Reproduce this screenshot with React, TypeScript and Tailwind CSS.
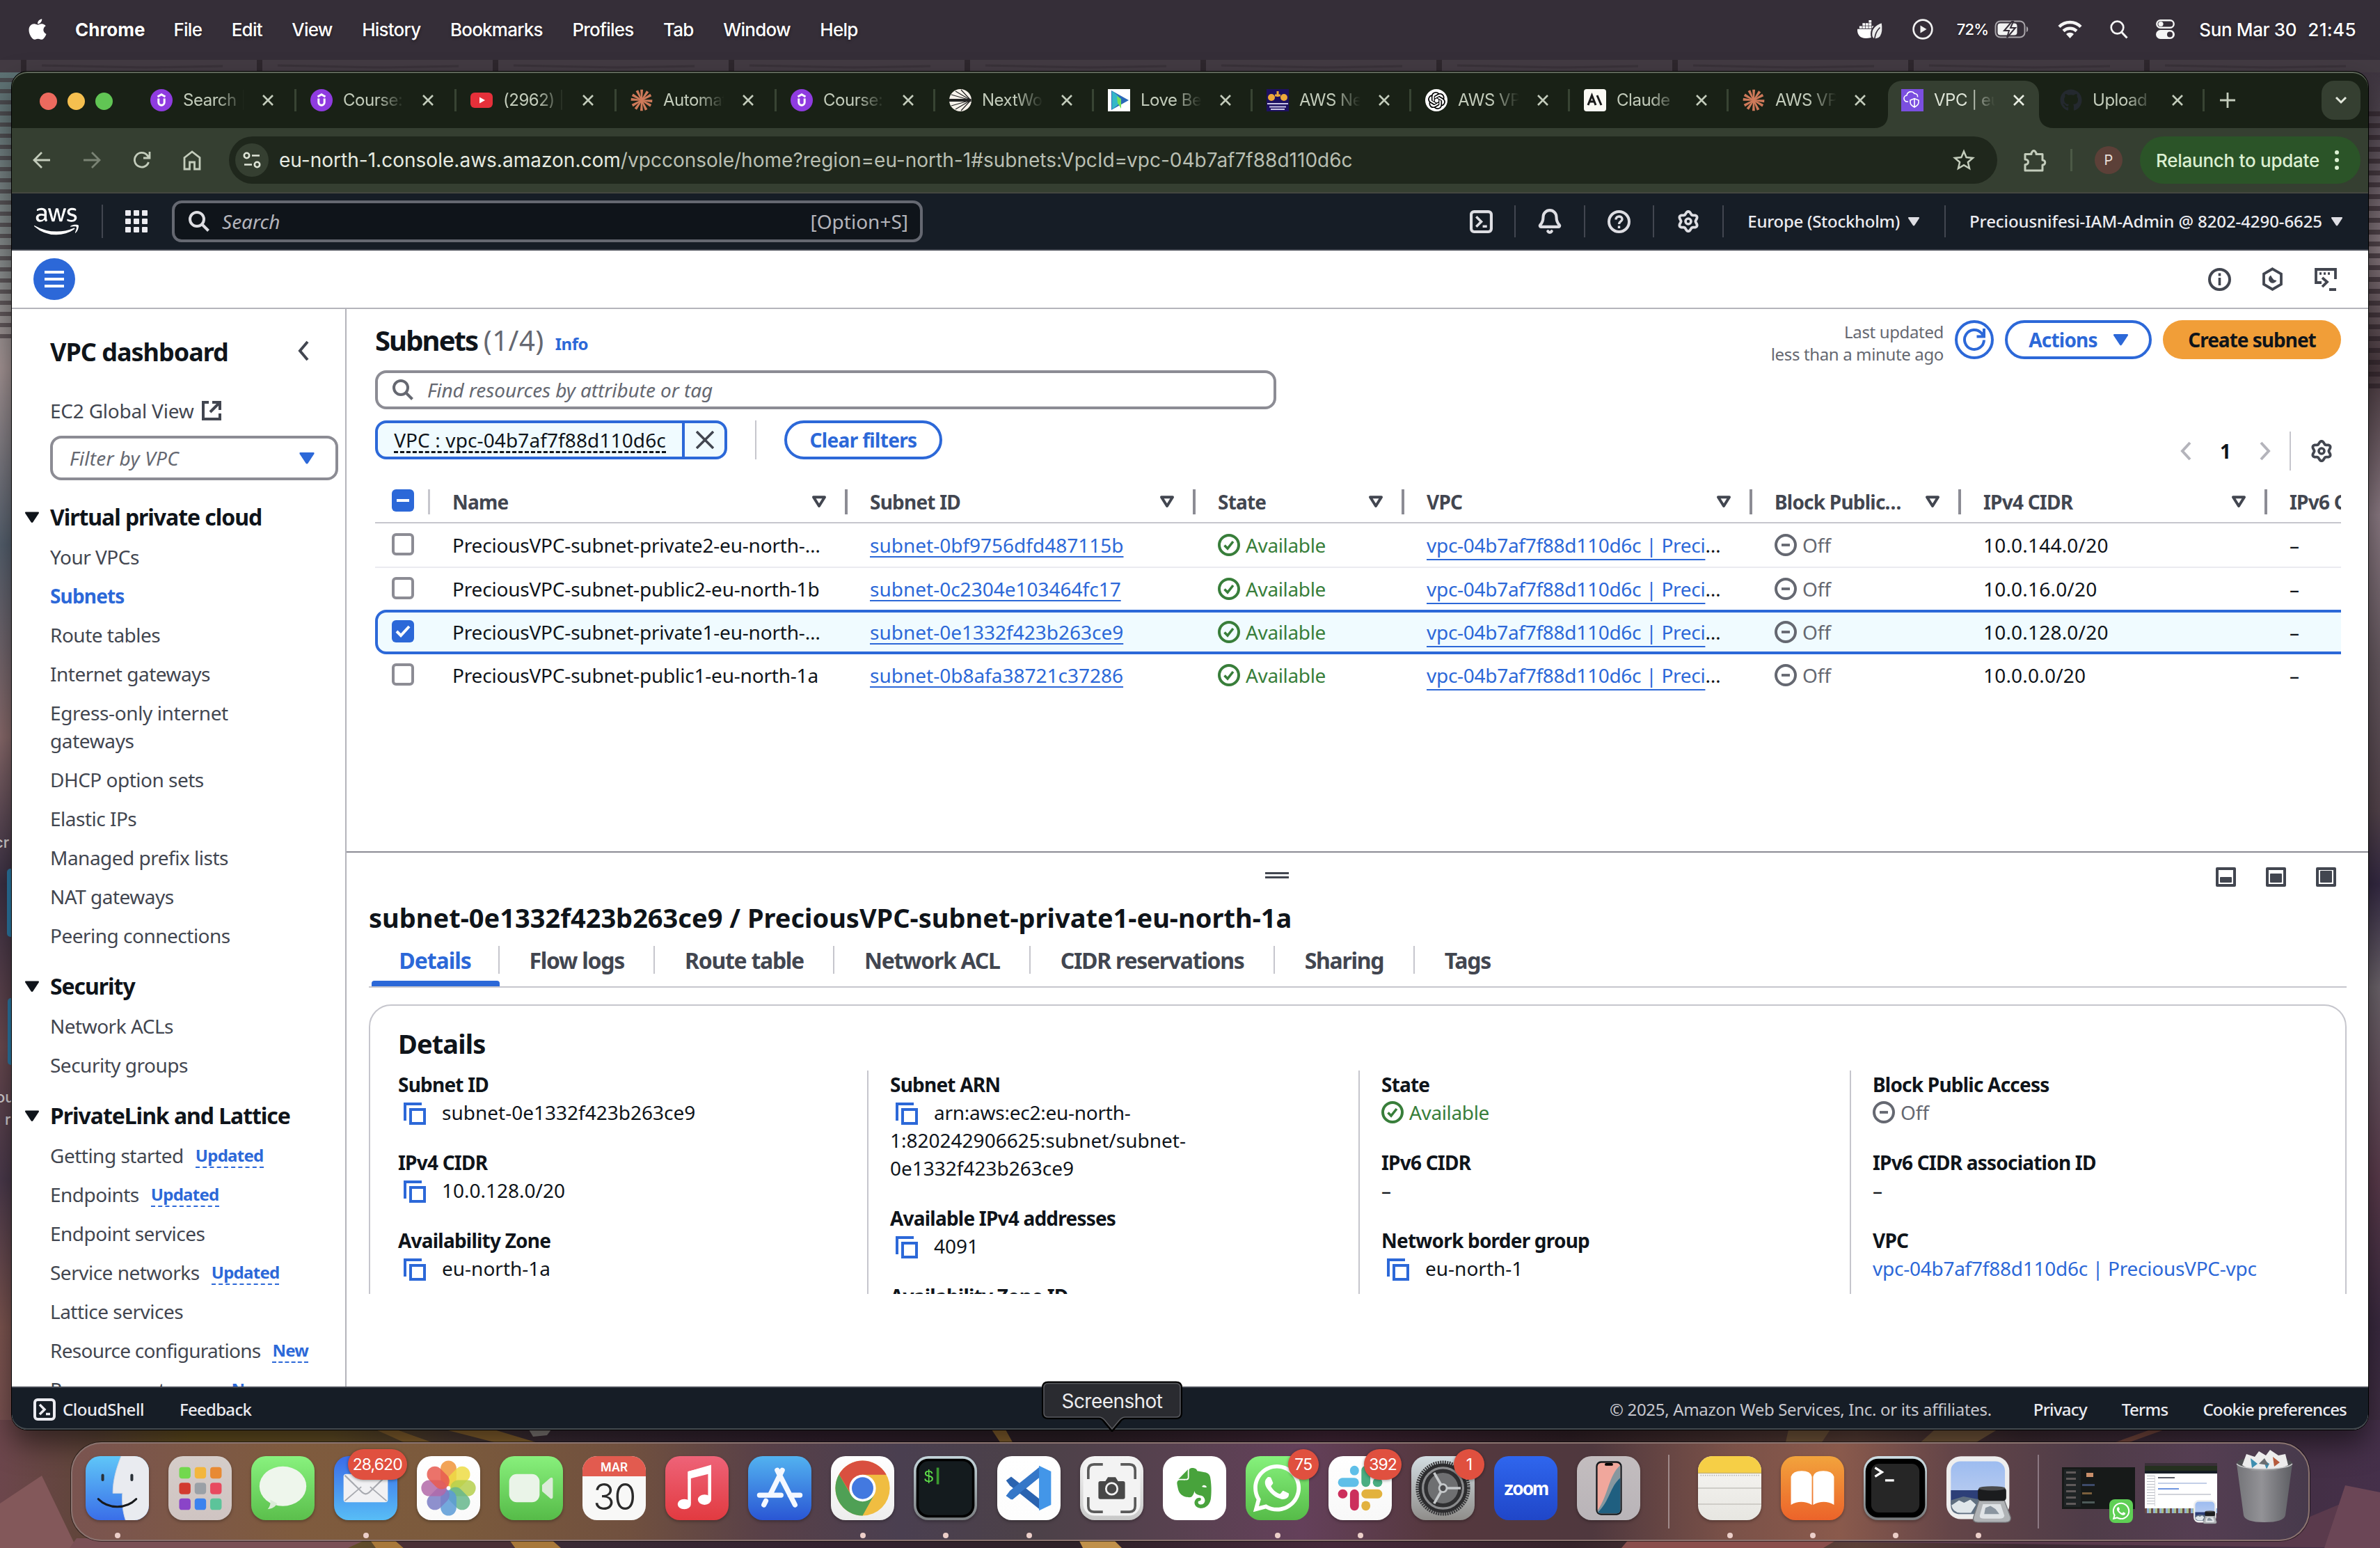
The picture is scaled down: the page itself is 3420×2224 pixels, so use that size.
import type { ReactNode } from "react";
import { Bell } from "lucide-react";
import { FaApple, FaGithub, FaWhatsapp, FaEvernote, FaDocker, FaAws } from "react-icons/fa";
import { SiOpenai } from "react-icons/si";

/* ---------- desktop ---------- */

function Wallpaper() {
  const bricks = Array.from({ length: 11 });
  const slats = Array.from({ length: 24 });
  return (
    <svg className="absolute inset-0 h-full w-full" viewBox="0 0 3420 2224" preserveAspectRatio="none">
      <defs>
        <linearGradient id="wl" x1="0" y1="0" x2="0" y2="1">
          <stop offset="0" stopColor="#5d7274" />
          <stop offset=".14" stopColor="#8d9090" />
          <stop offset=".2" stopColor="#a59595" />
          <stop offset=".32" stopColor="#56616f" />
          <stop offset=".45" stopColor="#8a6b6c" />
          <stop offset=".55" stopColor="#3a3044" />
          <stop offset=".66" stopColor="#6a4a50" />
          <stop offset=".75" stopColor="#4b3a4c" />
          <stop offset=".85" stopColor="#7d5550" />
          <stop offset="1" stopColor="#754e52" />
        </linearGradient>
        <linearGradient id="wr" x1="0" y1="0" x2="0" y2="1">
          <stop offset="0" stopColor="#3e3540" />
          <stop offset=".12" stopColor="#85777d" />
          <stop offset=".2" stopColor="#4a3a40" />
          <stop offset=".3" stopColor="#8c7b84" />
          <stop offset=".4" stopColor="#665960" />
          <stop offset=".5" stopColor="#54444c" />
          <stop offset=".55" stopColor="#352a44" />
          <stop offset=".62" stopColor="#6d656c" />
          <stop offset=".75" stopColor="#5b3b4c" />
          <stop offset=".85" stopColor="#3a2a40" />
          <stop offset="1" stopColor="#4a3548" />
        </linearGradient>
        <linearGradient id="wb" x1="0" y1="0" x2="1" y2="0">
          <stop offset="0" stopColor="#6c464c" />
          <stop offset=".04" stopColor="#5f4538" />
          <stop offset=".08" stopColor="#66501f" />
          <stop offset=".14" stopColor="#665026" />
          <stop offset=".19" stopColor="#4c3b33" />
          <stop offset=".23" stopColor="#3a2b36" />
          <stop offset=".35" stopColor="#33212f" />
          <stop offset=".45" stopColor="#2e2128" />
          <stop offset=".56" stopColor="#45283a" />
          <stop offset=".66" stopColor="#35232a" />
          <stop offset=".78" stopColor="#5b4038" />
          <stop offset=".85" stopColor="#3c2a32" />
          <stop offset="1" stopColor="#45304a" />
        </linearGradient>
      </defs>
      <rect width="3420" height="120" fill="#3d343c" />
      <rect y="86" width="3420" height="22" fill="#433b43" />
      {bricks.map((_, i) => (
        <g key={i}>
          <rect x={30 + i * 339} y="86" width="8" height="20" fill="#2e272d" />
          <path d={`M${60 + i * 339} 94 l150 3 l110 -2`} stroke="#3a323a" strokeWidth="3" fill="none" />
        </g>
      ))}
      <rect y="104" width="30" height="2120" fill="url(#wl)" />
      <rect x="3390" y="104" width="30" height="2120" fill="url(#wr)" />
      {slats.map((_, i) => (
        <g key={i}>
          <rect x="0" y={112 + i * 16} width="20" height="6" fill="#3c3036" opacity=".6" />
          <rect x="3402" y={160 + i * 17} width="18" height="7" fill="#2c2026" opacity=".6" />
        </g>
      ))}
      <rect y="2040" width="3420" height="184" fill="url(#wb)" />
      <path d="M0 2160 L60 2120 L110 2224 L0 2224Z" fill="#83585a" />
      <path d="M110 2210 h420 l-30 14 h-400z" fill="#7a5056" />
      <path d="M530 2210 h34 l16 14 h-40z M730 2210 h60 l16 14 h-66z" fill="#a8783a" />
      <path d="M564 2210 h166 l10 14 h-160z" fill="#4a3036" />
      <path d="M540 2054 l40 18 h40 l-50 -18z M640 2054 l70 18 h60 l-60 -18z M1425 2054 l12 18 h18 l-10 -18z" fill="#8a642f" />
      <path d="M760 2054 h32 l-6 8 -20 2z" fill="#8a8480" />
      <path d="M1550 2212 h50 l12 12 h-56z" fill="#c0904a" />
      <path d="M2570 2054 h60 l-12 18 h-52z M2780 2054 h90 l-30 18 h-80z" fill="#75583c" />
      <path d="M3040 2072 l50 -18 h20 l-50 18z" fill="#7a4a40" />
      <path d="M2340 2212 h900 l120 -50 40 0 20 62z" fill="#5a3a4c" />
      <path d="M3340 2224 l30 -90 50 10 v80z" fill="#6b4656" />
      <path d="M2340 2212 h300 l-20 12 h-290z" fill="#8a4e4c" />
      <rect x="10" y="1248" width="10" height="98" rx="5" fill="#2d7ba8" />
      <rect x="11" y="1434" width="9" height="96" rx="5" fill="#2d7ba8" />
    </svg>
  );
}

function MenuBar() {
  return (
    <div className="relative flex h-[86px] shrink-0 items-center bg-[#352e38] pb-[2px] pl-[38px] pr-[34px] font-['Inter',sans-serif] text-[26px] font-medium tracking-[-0.03em] text-white [text-shadow:0_2px_4px_rgba(0,0,0,0.4)]">
      <FaApple className="mr-[38px] h-[34px] w-[32px]" />
      <span className="mr-[41px] font-bold tracking-normal">Chrome</span>
      <div className="flex gap-[42.600px]">
        {["File", "Edit", "View", "History", "Bookmarks", "Profiles", "Tab", "Window", "Help"].map((m) => (
          <span key={m}>{m}</span>
        ))}
      </div>
      <div className="ml-auto flex items-center">
        <span className="relative mr-[42px] flex">
          <FaDocker className="h-[36px] w-[37px]" />
          <svg className="absolute -right-[2px] top-[6px] h-[30px] w-[22px]" viewBox="0 0 20 26">
            <path d="M17 1C5 5 2 12 3 19c1 5 8 6 12 1 4-6 3-13 2-19z" fill="#ececec" stroke="#352e38" strokeWidth="2" />
            <path d="M14 8c-5 5-6 9-7 15" stroke="#352e38" strokeWidth="1.500" fill="none" />
          </svg>
        </span>
        <svg className="mr-[34px] h-[30px] w-[30px]" viewBox="0 0 30 30">
          <circle cx="15" cy="15" r="13.400" fill="none" stroke="#f2f2f2" strokeWidth="2.600" />
          <path d="M11.500 9.500v11l9-5.500z" fill="#f2f2f2" />
        </svg>
        <span className="mr-[9px] text-[22px]">72%</span>
        <svg className="mr-[41px] h-[28px] w-[50px]" viewBox="0 0 50 28">
          <rect x="1.500" y="2.500" width="42" height="23" rx="7" fill="none" stroke="#a9a5aa" strokeWidth="2" />
          <rect x="4.500" y="5.500" width="28" height="17" rx="4" fill="#f2f2f2" />
          <path d="M46 10c3 1 3 7 0 8z" fill="#a9a5aa" />
          <path d="M25 3L14 16h7l-3 10 12-14h-7l4-9z" fill="#f2f2f2" stroke="#352e38" strokeWidth="2" />
        </svg>
        <svg className="mr-[40px] h-[26px] w-[35px]" viewBox="0 0 35 26">
          <g fill="none" stroke="#f5f5f5" strokeWidth="4.400">
            <path d="M2 9.500C10.500 .8 24.500 .8 33 9.500" />
            <path d="M8 15.500c5.500-5 13.500-5 19 0" />
          </g>
          <path d="M12 20c3-3 8-3 11 0l-5.500 6z" fill="#f5f5f5" />
        </svg>
        <svg className="mr-[40px] h-[27px] w-[26px]" viewBox="0 0 26 27">
          <circle cx="10.500" cy="10.500" r="8.800" fill="none" stroke="#f5f5f5" strokeWidth="2.700" />
          <path d="M17 17.500l7.500 8" stroke="#f5f5f5" strokeWidth="3" />
        </svg>
        <svg className="mr-[35px] h-[28px] w-[27px]" viewBox="0 0 27 28">
          <rect x="1.300" y="1.300" width="24.400" height="10.400" rx="5.200" fill="none" stroke="#f5f5f5" strokeWidth="2.400" />
          <circle cx="7" cy="6.500" r="3.600" fill="#f5f5f5" />
          <rect y="15" width="27" height="13" rx="6.500" fill="#f5f5f5" />
          <circle cx="20" cy="21.500" r="4" fill="#352e38" />
        </svg>
        <span className="mr-[16px] tracking-[-0.014em]">Sun Mar 30</span>
        <span className="tracking-[0.015em]">21:45</span>
      </div>
    </div>
  );
}

/* ---------- browser chrome ---------- */

function Udemy() {
  return (
    <svg viewBox="0 0 32 32" className="h-8 w-8">
      <circle cx="16" cy="16" r="16" fill="#8f3be0" />
      <path d="M10.500 11l5.500-3.200 5.500 3.200M11.800 13.500v5.500a4.200 4.200 0 0 0 8.400 0v-5.500" fill="none" stroke="#fff" strokeWidth="3" />
    </svg>
  );
}
function YouTube() {
  return (
    <svg viewBox="0 0 32 32" className="h-8 w-8">
      <rect y="5" width="32" height="22" rx="6" fill="#e5303a" />
      <path d="M13 11.500v9l8-4.500z" fill="#fff" />
    </svg>
  );
}
function Burst() {
  return (
    <svg viewBox="0 0 32 32" className="h-8 w-8">
      {Array.from({ length: 12 }).map((_, i) => (
        <path key={i} d="M16 16L15 1.500h2.200z" stroke="#cf7a5a" strokeWidth="1.600" fill="#cf7a5a" transform={`rotate(${i * 30 + (i % 2) * 4} 16 16)`} />
      ))}
    </svg>
  );
}
function NextWork() {
  return (
    <svg viewBox="0 0 32 32" className="h-8 w-8">
      <circle cx="16" cy="16" r="16" fill="#f6f1ea" />
      <path d="M0 14.500h31v3H0zM31 16L9 3M31 16L17 1M31 16L9 29M31 16L17 31M31 16L3 8M31 16L3 24" stroke="#222" strokeWidth="1.200" fill="#222" />
    </svg>
  );
}
function LoveBeauty() {
  return (
    <svg viewBox="0 0 32 32" className="h-8 w-8">
      <rect width="32" height="32" fill="#fff" />
      <path d="M5 2l25 14L5 30z" fill="#2a69b8" />
      <path d="M6 3c6 4 11 8 12 13-1 5-6 9-12 13z" fill="#35b8c8" />
      <path d="M13 10l6 4v14l-5-8z" fill="#74e05a" />
    </svg>
  );
}
function Mentorship() {
  return (
    <svg viewBox="0 0 32 32" className="h-8 w-8">
      <rect width="32" height="32" fill="#1d1060" />
      <circle cx="7" cy="12" r="5" fill="#eda93a" />
      <circle cx="25" cy="12" r="5" fill="#eda93a" />
      <path d="M16 3v8M12 9h8" stroke="#eda93a" strokeWidth="3" />
      <path d="M1 21h30M4 25.500h24M6 29h20" stroke="#c9c4e6" strokeWidth="1.800" />
    </svg>
  );
}
function OpenAi() {
  return (
    <span className="flex h-8 w-8 items-center justify-center rounded-full bg-white">
      <SiOpenai className="h-[25px] w-[25px] text-black" />
    </span>
  );
}
function AnthropicMark() {
  return (
    <svg viewBox="0 0 32 32" className="h-8 w-8">
      <rect width="32" height="32" rx="4" fill="#fbfaf4" />
      <path d="M6 23l5.500-14 5.500 14M8 18h7M19 9l6 14" fill="none" stroke="#1a1a1a" strokeWidth="3" />
    </svg>
  );
}
function VpcMark() {
  return (
    <svg viewBox="0 0 32 32" className="h-8 w-8">
      <rect width="32" height="32" fill="#7b4fe0" />
      <path d="M10 18H9a4.500 4.500 0 0 1-1-9 6 6 0 0 1 11-2.500 4 4 0 0 1 4.500 5" fill="none" stroke="#fff" strokeWidth="1.600" />
      <path d="M13 16l6-2.500 6 2.500v3c0 3.500-3 5.500-6 7-3-1.500-6-3.500-6-7zM19 14v12" fill="none" stroke="#fff" strokeWidth="1.600" />
    </svg>
  );
}

const tabs: { icon: ReactNode; title: string; active?: boolean }[] = [
  { icon: <Udemy />, title: "Search |" },
  { icon: <Udemy />, title: "Course:" },
  { icon: <YouTube />, title: "(2962) |" },
  { icon: <Burst />, title: "Automat" },
  { icon: <Udemy />, title: "Course:" },
  { icon: <NextWork />, title: "NextWo" },
  { icon: <LoveBeauty />, title: "Love Be" },
  { icon: <Mentorship />, title: "AWS Ne" },
  { icon: <OpenAi />, title: "AWS VP" },
  { icon: <AnthropicMark />, title: "Claude" },
  { icon: <Burst />, title: "AWS VP" },
  { icon: <VpcMark />, title: "VPC | eu", active: true },
  { icon: <FaGithub className="h-8 w-8 text-[#24292f]" />, title: "Upload" },
];

function TabStrip() {
  return (
    <div className="flex h-[81px] shrink-0 items-start bg-[#192116] pl-[40px] pr-[11px] font-['Inter',sans-serif] text-[24px] tracking-[-0.02em] text-[#c3ccbb]">
      <div className="mt-[30px] flex w-[139px] shrink-0 gap-[15px]">
        <span className="h-[25px] w-[25px] rounded-full bg-[#ed6a5e]" />
        <span className="h-[25px] w-[25px] rounded-full bg-[#f5bf4f]" />
        <span className="h-[25px] w-[25px] rounded-full bg-[#61c554]" />
      </div>
      {tabs.map((t, i) => (
        <div key={i} className={i < 4 ? "relative h-[81px] w-[230px] shrink-0 pt-[13px]" : "relative h-[81px] w-[228px] shrink-0 pt-[13px]"}>
          {t.active && (
            <svg className="absolute left-[-19px] top-[13px] h-[68px] w-[258px]" viewBox="0 0 258 68">
              <path d="M0 68C14 68 20 60 20 48V20A20 20 0 0 1 40 0H217A20 20 0 0 1 237 20V48C237 60 244 68 258 68Z" fill="#353f31" />
            </svg>
          )}
          <div className="relative flex h-[56px] items-center pl-[20px]">
            {t.icon}
            <span className={t.active ? "ml-[15px] w-[88px] overflow-hidden whitespace-nowrap text-[#dfe5d8] [mask-image:linear-gradient(to_right,black_55%,transparent)]" : "ml-[15px] w-[88px] overflow-hidden whitespace-nowrap [mask-image:linear-gradient(to_right,black_55%,transparent)]"}>
              {t.title}
            </span>
            <svg className="ml-[25px] h-[18px] w-[18px]" viewBox="0 0 18 18">
              <path d="M2 2l14 14M16 2L2 16" stroke={t.active ? "#e8ede2" : "#c3ccbb"} strokeWidth="2.600" />
            </svg>
            {i !== 10 && i !== 11 && <span className="ml-auto h-[32px] w-[3px] bg-[#384433]" />}
          </div>
        </div>
      ))}
      <svg className="ml-[22px] mt-[30px] h-[22px] w-[22px] shrink-0" viewBox="0 0 22 22">
        <path d="M11 0v22M0 11h22" stroke="#c3ccbb" strokeWidth="2.800" />
      </svg>
      <span className="ml-auto mt-[13px] flex h-[56px] w-[56px] items-center justify-center rounded-[18px] bg-[#353f31]">
        <svg className="h-[12px] w-[18px]" viewBox="0 0 18 12">
          <path d="M2 2l7 7 7-7" fill="none" stroke="#e3e8dc" strokeWidth="3" />
        </svg>
      </span>
    </div>
  );
}

function Toolbar() {
  return (
    <div className="flex h-[94px] shrink-0 items-center border-b-2 border-[#44473f] bg-[#353f31] pl-[30px] pr-[11px] font-['Inter',sans-serif]">
      <svg className="h-[28px] w-[26px]" viewBox="0 0 26 26"><path d="M25 13H3M13 2L2 13l11 11" fill="none" stroke="#c3ccbb" strokeWidth="2.800" /></svg>
      <svg className="ml-[46px] h-[28px] w-[26px]" viewBox="0 0 26 26"><path d="M1 13h22M13 2l11 11-11 11" fill="none" stroke="#7a8374" strokeWidth="2.800" /></svg>
      <svg className="ml-[46px] h-[28px] w-[26px]" viewBox="0 0 26 26"><path d="M22.500 16A10.300 10.300 0 1 1 20.500 6l3 3.500M24 1v9h-9" fill="none" stroke="#c3ccbb" strokeWidth="2.800" /></svg>
      <svg className="ml-[46px] h-[30px] w-[26px]" viewBox="0 0 26 30"><path d="M2 11.500L13 3l11 8.500V28h-7.500V18h-7v10H2z" fill="none" stroke="#c3ccbb" strokeWidth="2.800" /></svg>
      <div className="ml-[40px] flex h-[68px] w-[2541px] items-center rounded-full bg-[#1f271c] pl-[9px] pr-[32px]">
        <span className="flex h-[48px] w-[48px] items-center justify-center rounded-full bg-[#353f31]">
          <svg className="h-[24px] w-[26px]" viewBox="0 0 26 24" fill="none" stroke="#dfe5d8" strokeWidth="2.600">
            <circle cx="5.500" cy="5.500" r="3.700" /><path d="M13 5.500h11M2 18.500h11" /><circle cx="20.500" cy="18.500" r="3.700" />
          </svg>
        </span>
        <span className="ml-[15px] whitespace-nowrap text-[28px] tracking-[0.0006em] text-[#b9bfb3]">
          <span className="text-[#e6eae1]">eu-north-1.console.aws.amazon.com</span>/vpcconsole/home?region=eu-north-1#subnets:VpcId=vpc-04b7af7f88d110d6c
        </span>
        <svg className="ml-auto h-[32px] w-[32px]" viewBox="0 0 32 32">
          <path d="M16 3.500l3.600 8.600 9.300.8-7 6.100 2.100 9L16 23.200 8 28l2.100-9-7-6.100 9.300-.8z" fill="none" stroke="#c3ccbb" strokeWidth="2.500" />
        </svg>
      </div>
      <svg className="ml-[37px] h-[34px] w-[34px]" viewBox="0 0 34 34">
        <path d="M3 8.500h9V7q3.500-7 7 0v1.500H28v8.500c5 0 5 7 0 7v8H3v-8.500c6 0 6-7.500 0-7.500z" fill="none" stroke="#c3ccbb" strokeWidth="3" strokeLinejoin="round" />
      </svg>
      <span className="ml-[34px] h-[32px] w-[3px] bg-[#4c5a46]" />
      <span className="ml-[32px] flex h-[40px] w-[40px] items-center justify-center rounded-full bg-[#5c4038] text-[20px] text-[#eadfd8]">P</span>
      <div className="ml-auto flex h-[68px] w-[317px] items-center rounded-full bg-[#2b5428] pl-[23px] text-[26px] font-medium tracking-[-0.01em] text-[#dcefd2]">
        <span>Relaunch to update</span>
        <svg className="ml-[22px] h-[28px] w-[6px]" viewBox="0 0 6 28" fill="#dcefd2">
          <circle cx="3" cy="3" r="3" /><circle cx="3" cy="14" r="3" /><circle cx="3" cy="25" r="3" />
        </svg>
      </div>
    </div>
  );
}

/* ---------- AWS console ---------- */

const gearOutline =
  Array.from({ length: 72 })
    .map((_, i) => {
      const a = (i / 72) * Math.PI * 2;
      const r = 12.300 + 1.900 * Math.cos(6 * (a + Math.PI / 2));
      return `${i === 0 ? "M" : "L"}${(16 + r * Math.cos(a)).toFixed(2)} ${(16 + r * Math.sin(a)).toFixed(2)}`;
    })
    .join("") + "Z";

function Gear({ className }: { className: string }) {
  return (
    <svg className={className} viewBox="0 0 32 32" fill="none" stroke="currentColor" strokeWidth="3.800" strokeLinejoin="round">
      <path d={gearOutline} transform="rotate(0 16 16)" />
      <circle cx="16" cy="16" r="4" strokeWidth="3.600" />
    </svg>
  );
}
function ShellIcon({ className }: { className: string }) {
  return (
    <svg className={className} viewBox="0 0 32 32" fill="none" stroke="currentColor" strokeWidth="4">
      <rect x="2" y="2" width="28" height="28" rx="4" />
      <path d="M9 9l7 7-7 7M18 22.500h6" strokeWidth="3.500" />
    </svg>
  );
}
function Caret({ className }: { className: string }) {
  return (
    <svg className={className} viewBox="0 0 20 16"><path d="M1 0h18q1.500 .3.700 2L11.500 14.500q-1.500 2-3 0L.3 2Q-.5.300 1 0z" fill="currentColor" /></svg>
  );
}
function SearchIcon({ className }: { className: string }) {
  return (
    <svg className={className} viewBox="0 0 30 30" fill="none" stroke="currentColor" strokeWidth="4">
      <circle cx="12" cy="12" r="10" /><path d="M19 19l9.500 9.500" />
    </svg>
  );
}
function NavSep() {
  return <span className="h-[46px] w-[2px] shrink-0 bg-[#424650]" />;
}

function AwsNav() {
  return (
    <div className="flex h-[82px] shrink-0 items-center border-b-2 border-[#424650] bg-[#161d26] pl-[32px] pr-[37px] text-white">
      <FaAws className="h-[64px] w-[64px] shrink-0" />
      <span className="ml-[33px] h-[48px] w-[2px] bg-[#424650]" />
      <div className="ml-[32px] grid grid-cols-3 gap-[4px]">
        {Array.from({ length: 9 }).map((_, i) => (
          <span key={i} className="h-[8px] w-[8px] rounded-[1px] bg-[#ebebf0]" />
        ))}
      </div>
      <div className="ml-[35px] flex h-[60px] w-[1079px] items-center rounded-[14px] border-4 border-[#656871] bg-[#0f141a] pl-[20px] pr-[17px] text-[28px] text-[#b4b4bb]">
        <SearchIcon className="h-[30px] w-[30px] text-[#dedee3]" />
        <span className="ml-[18px] italic">Search</span>
        <span className="ml-auto">[Option+S]</span>
      </div>
      <div className="ml-auto flex items-center text-[#dedee3]">
        <ShellIcon className="mr-[31px] h-[33px] w-[33px]" />
        <NavSep />
        <Bell className="mx-[30px] h-[38px] w-[38px]" strokeWidth={2.600} />
        <NavSep />
        <svg className="mx-[32px] h-[33px] w-[33px]" viewBox="0 0 33 33" fill="none" stroke="currentColor" strokeWidth="4">
          <circle cx="16.500" cy="16.500" r="14.500" />
          <path d="M12 13.500c0-6 9-6 9-.5 0 3.500-4.500 3-4.500 7M16.500 22.500v3.500" strokeWidth="3.400" />
        </svg>
        <NavSep />
        <Gear className="mx-[33px] h-[32px] w-[32px]" />
        <NavSep />
        <span className="ml-[34px] text-[24px] font-medium tracking-[-0.012em] text-[#ebebf0]">Europe (Stockholm)</span>
        <Caret className="ml-[12px] mr-[36px] h-[13px] w-[16px]" />
        <NavSep />
        <span className="ml-[34px] text-[24px] font-medium tracking-[-0.0035em] text-[#ebebf0]">Preciousnifesi-IAM-Admin @ 8202-4290-6625</span>
        <Caret className="ml-[13px] h-[13px] w-[16px]" />
      </div>
    </div>
  );
}

function PageBar() {
  return (
    <div className="flex h-[84px] shrink-0 items-center border-b-2 border-[#b4b4bb] bg-white pl-[31px] pr-[44px] text-[#424650]">
      <span className="flex h-[60px] w-[60px] items-center justify-center rounded-full bg-[#2c68d8]">
        <svg className="h-[24px] w-[28px]" viewBox="0 0 28 24"><path d="M0 2h28M0 12h28M0 22h28" stroke="#fff" strokeWidth="4" /></svg>
      </span>
      <svg className="ml-auto h-[33px] w-[33px]" viewBox="0 0 33 33" fill="none" stroke="currentColor" strokeWidth="4">
        <circle cx="16.500" cy="16.500" r="14.500" /><path d="M16.500 7.500v4M16.500 14v11" strokeWidth="3.600" />
      </svg>
      <svg className="ml-[43px] h-[34px] w-[33px]" viewBox="0 0 33 34" fill="none" stroke="currentColor" strokeWidth="3.800">
        <path d="M16.500 2.300L29 9.500v15L16.500 31.700 4 24.500v-15z" />
        <path d="M14 11.500a6 6 0 1 0 8.500 7.500l-4-1-2.500-3z" fill="currentColor" stroke="none" />
      </svg>
      <svg className="ml-[43px] h-[33px] w-[34px]" viewBox="0 0 34 33" fill="none" stroke="currentColor" strokeWidth="3.800">
        <path d="M31 16V2H3v19h8" /><path d="M8 8h3M14 8h3M20 8h3" strokeWidth="3.600" />
        <path d="M12 14l7 6-7 7M22 31h10" />
      </svg>
    </div>
  );
}

type NavItem = { label: string; badge?: string; active?: boolean };
const navSections: { title: string; items: NavItem[] }[] = [
  {
    title: "Virtual private cloud",
    items: [
      { label: "Your VPCs" },
      { label: "Subnets", active: true },
      { label: "Route tables" },
      { label: "Internet gateways" },
      { label: "Egress-only internet gateways" },
      { label: "DHCP option sets" },
      { label: "Elastic IPs" },
      { label: "Managed prefix lists" },
      { label: "NAT gateways" },
      { label: "Peering connections" },
    ],
  },
  { title: "Security", items: [{ label: "Network ACLs" }, { label: "Security groups" }] },
  {
    title: "PrivateLink and Lattice",
    items: [
      { label: "Getting started", badge: "Updated" },
      { label: "Endpoints", badge: "Updated" },
      { label: "Endpoint services" },
      { label: "Service networks", badge: "Updated" },
      { label: "Lattice services" },
      { label: "Resource configurations", badge: "New" },
      { label: "Resource gateways", badge: "New" },
    ],
  },
];

function SideNav() {
  return (
    <div className="w-[481px] shrink-0 overflow-hidden border-r-2 border-[#b4b4bb] pl-[55px] text-[#424650]">
      <div className="mt-[41px] flex h-[42px] items-center">
        <span className="text-[36px] font-bold tracking-[-0.028em] text-[#0f141a]">VPC dashboard</span>
        <svg className="ml-[99px] mt-[-4px] h-[30px] w-[18px]" viewBox="0 0 18 30"><path d="M15 2L4 15l11 13" fill="none" stroke="#424650" strokeWidth="4" /></svg>
      </div>
      <div className="mt-[43px] flex h-[40px] items-center text-[28px] tracking-[-0.008em]">
        EC2 Global View
        <svg className="ml-[12px] h-[28px] w-[28px]" viewBox="0 0 28 28" fill="none" stroke="currentColor" strokeWidth="4">
          <path d="M10 2H2v24h24v-8M15 2h11v11M25 3L12 16" />
        </svg>
      </div>
      <div className="mt-[16px] flex h-[64px] w-[414px] items-center rounded-[16px] border-4 border-[#8c8c94] pl-[24px] pr-[30px] text-[28px] italic tracking-[0.01em] text-[#656871]">
        Filter by VPC
        <Caret className="ml-auto h-[17px] w-[22px] text-[#2c68d8]" />
      </div>
      {navSections.map((s) => (
        <div key={s.title} className="mt-[33px]">
          <div className="ml-[-36px] flex h-[40px] items-center text-[#0f141a]">
            <Caret className="h-[17px] w-[20px]" />
            <span className="ml-[16px] text-[32px] font-bold tracking-[-0.033em]">{s.title}</span>
          </div>
          <div className="mt-[17px] flex flex-col gap-[16px] text-[28px] leading-[40px] tracking-[-0.022em]">
            {s.items.map((it) => (
              <div key={it.label} className="flex max-w-[400px] items-start">
                <span className={it.active ? "font-bold tracking-[-0.03em] text-[#2c68d8]" : it.label.startsWith("Egress") ? "w-[300px] tracking-[-0.014em]" : it.label === "Resource configurations" ? "whitespace-nowrap tracking-[-0.026em]" : it.badge ? "whitespace-nowrap tracking-[-0.018em]" : "whitespace-nowrap tracking-[-0.018em]"}>{it.label}</span>
                {it.badge && (
                  <span className="ml-[17px] mt-[4px] h-[34px] border-b-2 border-dashed border-[#2c68d8] text-[24px] font-bold leading-[32px] tracking-[-0.03em] text-[#2c68d8]">{it.badge}</span>
                )}
              </div>
            ))}
          </div>
        </div>
      ))}
    </div>
  );
}

function SubnetsHeader() {
  return (
    <div className="flex h-[88px] shrink-0 items-center pr-[39px]">
      <span className="mt-[2px] text-[40px] font-bold tracking-[-0.048em] text-[#0f141a]">
        Subnets <span className="font-normal tracking-[0.012em] text-[#656871]">(1/4)</span>
      </span>
      <span className="ml-[16px] mt-[12px] text-[24px] font-bold tracking-[-0.02em] text-[#2c68d8]">Info</span>
      <div className="ml-auto mt-[10px] text-right text-[24px] leading-[32px] tracking-[-0.015em] text-[#656871]">
        <div>Last updated</div>
        <div>less than a minute ago</div>
      </div>
      <span className="ml-[16px] flex h-[56px] w-[56px] items-center justify-center rounded-full border-4 border-[#2c68d8] text-[#2c68d8]">
        <svg className="h-[34px] w-[34px]" viewBox="0 0 34 34" fill="none" stroke="currentColor" strokeWidth="4">
          <path d="M31 17.500A14 14 0 1 1 27.300 7.500l3.500 4M31 1v11.500H20.500" />
        </svg>
      </span>
      <span className="ml-[16px] flex h-[56px] w-[211px] items-center justify-center rounded-full border-4 border-[#2c68d8] text-[28px] font-bold tracking-[-0.028em] text-[#2c68d8]">
        Actions
        <Caret className="ml-[23px] h-[17px] w-[21px]" />
      </span>
      <span className="ml-[16px] flex h-[56px] w-[256px] items-center justify-center rounded-full bg-[#f19e38] text-[28px] font-bold tracking-[-0.036em] text-[#0f141a]">Create subnet</span>
    </div>
  );
}

function FilterBar() {
  return (
    <div className="flex h-[144px] shrink-0 items-start pr-[39px]">
      <div className="flex flex-col gap-[16px]">
        <div className="flex h-[56px] w-[1295px] items-center rounded-[16px] border-4 border-[#8c8c94] pl-[21px] text-[28px] italic tracking-[-0.003em] text-[#656871]">
          <SearchIcon className="mr-[20px] h-[30px] w-[30px]" />
          Find resources by attribute or tag
        </div>
        <div className="flex h-[56px] items-center">
          <div className="flex h-[56px] w-[506px] overflow-hidden rounded-[16px] border-4 border-[#2c68d8] bg-[#f0fbff]">
            <div className="flex flex-1 items-center justify-center border-r-4 border-[#2c68d8]">
              <span className="h-[38px] border-b-[3px] border-dashed border-[#0f141a] text-[28px] leading-[38px] tracking-[0.004em] text-[#0f141a]">VPC : vpc-04b7af7f88d110d6c</span>
            </div>
            <div className="flex w-[57px] items-center justify-center">
              <svg className="h-[26px] w-[26px]" viewBox="0 0 26 26"><path d="M1 1l24 24M25 1L1 25" stroke="#424650" strokeWidth="3.600" /></svg>
            </div>
          </div>
          <span className="ml-[40px] h-[56px] w-[2px] bg-[#c6c6cd]" />
          <span className="ml-[40px] flex h-[56px] w-[227px] items-center justify-center rounded-full border-4 border-[#2c68d8] text-[28px] font-bold tracking-[-0.024em] text-[#2c68d8]">Clear filters</span>
        </div>
      </div>
      <div className="ml-auto flex h-[56px] items-center self-end">
        <svg className="h-[28px] w-[18px]" viewBox="0 0 18 28"><path d="M15 2L4 14l11 12" fill="none" stroke="#b4b4bb" strokeWidth="4" /></svg>
        <span className="ml-[39px] w-[18px] text-center text-[28px] font-bold text-[#0f141a]">1</span>
        <svg className="ml-[39px] h-[28px] w-[18px]" viewBox="0 0 18 28"><path d="M3 2l11 12L3 26" fill="none" stroke="#b4b4bb" strokeWidth="4" /></svg>
        <span className="ml-[26px] h-[56px] w-[2px] bg-[#c6c6cd]" />
        <Gear className="ml-[28px] mr-[12px] h-[32px] w-[32px] text-[#424650]" />
      </div>
    </div>
  );
}

function FilterGlyph() {
  return (
    <svg className="ml-auto mr-[26px] h-[18px] w-[22px] shrink-0" viewBox="0 0 22 18"><path d="M3 2.200h16L11 15z" fill="none" stroke="#424650" strokeWidth="4" strokeLinejoin="round" /></svg>
  );
}

const columns = [
  { label: "Name", width: "w-[600px]" },
  { label: "Subnet ID", width: "w-[500px]" },
  { label: "State", width: "w-[300px]" },
  { label: "VPC", width: "w-[500px]" },
  { label: "Block Public…", width: "w-[300px]" },
  { label: "IPv4 CIDR", width: "w-[440px]" },
];

const subnets = [
  { name: "PreciousVPC-subnet-private2-eu-north-…", id: "subnet-0bf9756dfd487115b", cidr: "10.0.144.0/20" },
  { name: "PreciousVPC-subnet-public2-eu-north-1b", id: "subnet-0c2304e103464fc17", cidr: "10.0.16.0/20" },
  { name: "PreciousVPC-subnet-private1-eu-north-…", id: "subnet-0e1332f423b263ce9", cidr: "10.0.128.0/20", selected: true },
  { name: "PreciousVPC-subnet-public1-eu-north-1a", id: "subnet-0b8afa38721c37286", cidr: "10.0.0.0/20" },
];

function Available() {
  return (
    <span className="flex items-center gap-[8px] tracking-[-0.013em] text-[#387e3a]">
      <svg className="h-[32px] w-[32px]" viewBox="0 0 32 32" fill="none" stroke="currentColor" strokeWidth="4">
        <circle cx="16" cy="16" r="14" /><path d="M9.500 16.500l4.500 4.500 8-10" strokeWidth="3.600" />
      </svg>
      Available
    </span>
  );
}
function Off() {
  return (
    <span className="flex items-center gap-[8px] text-[#656871]">
      <svg className="h-[32px] w-[32px]" viewBox="0 0 32 32" fill="none" stroke="currentColor" strokeWidth="4">
        <circle cx="16" cy="16" r="14" /><path d="M10 16h12" strokeWidth="3.800" />
      </svg>
      Off
    </span>
  );
}

function SubnetsTable() {
  return (
    <div className="w-[2825px] overflow-hidden whitespace-nowrap text-[28px]">
      <div className="flex h-[76px] w-[3000px] items-center border-b-2 border-[#c6c6cd] pt-[16px] font-bold tracking-[-0.028em] text-[#424650]">
        <div className="flex w-[79px] items-center pl-[24px]">
          <span className="mt-[-4px] flex h-[32px] w-[32px] items-center justify-center rounded-[6px] bg-[#2c68d8]"><span className="h-[4px] w-[18px] bg-white" /></span>
          <span className="ml-auto h-[36px] w-[3px] bg-[#c6c6cd]" />
        </div>
        {columns.map((c) => (
          <div key={c.label} className={"flex items-center pl-[32px] " + c.width}>
            {c.label}
            <FilterGlyph />
            <span className="h-[36px] w-[4px] bg-[#8c8c94]" />
          </div>
        ))}
        <div className="pl-[32px]">IPv6 CIDR</div>
      </div>
      {subnets.map((r, i) => (
        <div
          key={r.id}
          className={
            r.selected
              ? "flex h-[64px] w-[3000px] items-center rounded-l-[16px] border-4 border-[#2c68d8] bg-[#f0fbff]"
              : i === 0
                ? "flex h-[64px] w-[3000px] items-center border-b-2 border-[#ebebf0]"
                : "flex h-[60px] w-[3000px] items-center"
          }
        >
          <div className={r.selected ? "flex w-[75px] items-center pl-[20px]" : "flex w-[79px] items-center pl-[24px]"}>
            {r.selected ? (
              <span className="mt-[-3px] flex h-[32px] w-[32px] items-center justify-center rounded-[6px] bg-[#2c68d8]">
                <svg className="h-[18px] w-[22px]" viewBox="0 0 22 18"><path d="M2 9l6 6L20 2" fill="none" stroke="#fff" strokeWidth="4" /></svg>
              </span>
            ) : (
              <span className="mt-[-3px] h-[32px] w-[32px] rounded-[6px] border-4 border-[#8c8c94] bg-white" />
            )}
          </div>
          <div className="w-[600px] pl-[32px] tracking-[-0.007em] text-[#0f141a]">{r.name}</div>
          <div className="w-[500px] pl-[32px] text-[#2c68d8]"><span className="underline decoration-2 underline-offset-[5px]">{r.id}</span></div>
          <div className="w-[300px] pl-[32px]"><Available /></div>
          <div className="w-[500px] pl-[32px]">
            <span className="tracking-[-0.01em] text-[#2c68d8] underline decoration-2 underline-offset-[9px] [text-decoration-skip-ink:none]">vpc-04b7af7f88d110d6c | Preci</span>
            <span className="text-[#0f141a]">…</span>
          </div>
          <div className="w-[300px] pl-[32px]"><Off /></div>
          <div className="w-[440px] pl-[32px] tracking-[0.007em] text-[#0f141a]">{r.cidr}</div>
          <div className="pl-[32px] text-[#0f141a]">–</div>
        </div>
      ))}
    </div>
  );
}

function CopyIcon() {
  return (
    <svg className="ml-[8px] mr-[23px] inline-block h-[32px] w-[32px] align-[-7px]" viewBox="0 0 32 32" fill="none" stroke="#2c68d8" strokeWidth="4">
      <path d="M26 2H2v24" /><rect x="10" y="10" width="20" height="20" />
    </svg>
  );
}

function Field({ label, children }: { label: string; children?: ReactNode }) {
  return (
    <div className="mb-[32px] text-[28px] leading-[40px] text-[#0f141a]">
      <div className="font-bold tracking-[-0.028em]">{label}</div>
      <div>{children}</div>
    </div>
  );
}

function DetailPanel() {
  const detailTabs = ["Flow logs", "Route table", "Network ACL", "CIDR reservations", "Sharing", "Tags"];
  return (
    <div className="absolute inset-x-0 bottom-0 top-[779px] border-t-2 border-[#8c8c94] bg-white pl-[32px] pr-[31px]">
      <div className="flex h-[68px] items-center">
        <span className="ml-[1288px] mt-[-4px] h-[9px] w-[34px] border-y-[3px] border-[#424650]" />
        <div className="ml-auto mr-[15px] mt-[2px] flex gap-[43px]">
          {["h-[8px]", "h-[13px]", "h-[17px]"].map((h) => (
            <span key={h} className="flex h-[28px] w-[29px] items-end justify-center rounded-[2px] border-4 border-[#424650] pb-[2px]">
              <span className={"w-[17px] rounded-[1px] bg-[#424650] " + h} />
            </span>
          ))}
        </div>
      </div>
      <div className="flex h-[50px] items-center whitespace-nowrap text-[38px] font-bold text-[#0f141a]">subnet-0e1332f423b263ce9 / PreciousVPC-subnet-private1-eu-north-1a</div>
      <div className="flex h-[76px] border-b-2 border-[#c6c6cd] text-[32px] font-bold tracking-[-0.04em] text-[#424650]">
        <div className="ml-[4px] flex w-[184px] flex-col items-center text-[#2c68d8]">
          <div className="mt-[16px] h-[40px] w-full border-r-2 border-[#c6c6cd] text-center leading-[42px] tracking-[-0.033em]">Details</div>
          <span className="mt-auto h-[8px] w-full rounded-t-[4px] bg-[#2c68d8]" />
        </div>
        {detailTabs.map((t, i) => (
          <div key={t} className={i === 5 ? "mt-[16px] h-[40px] px-[43px] leading-[42px]" : "mt-[16px] h-[40px] border-r-2 border-[#c6c6cd] px-[42.500px] leading-[42px]"}>{t}</div>
        ))}
      </div>
      <div className="mt-[24px] h-[416px] overflow-hidden">
        <div className="h-[600px] rounded-[32px] border-2 border-[#c6c6cd] pl-[40px] pt-[29px]">
          <div className="h-[50px] text-[38px] font-bold leading-[50px] tracking-[-0.023em] text-[#0f141a]">Details</div>
          <div className="mt-[14px] flex h-[500px]">
            <div className="w-[674px]">
              <Field label="Subnet ID"><CopyIcon />subnet-0e1332f423b263ce9</Field>
              <Field label="IPv4 CIDR"><CopyIcon />10.0.128.0/20</Field>
              <Field label="Availability Zone"><CopyIcon />eu-north-1a</Field>
            </div>
            <div className="w-[706px] border-l-2 border-[#c6c6cd] pl-[31px]">
              <Field label="Subnet ARN">
                <span className="tracking-[-0.009em]"><CopyIcon />arn:aws:ec2:eu-north-</span><br />1:820242906625:subnet/subnet-<br />0e1332f423b263ce9
              </Field>
              <Field label="Available IPv4 addresses"><CopyIcon />4091</Field>
              <Field label="Availability Zone ID" />
            </div>
            <div className="w-[706px] border-l-2 border-[#c6c6cd] pl-[31px]">
              <Field label="State"><Available /></Field>
              <Field label="IPv6 CIDR">–</Field>
              <Field label="Network border group"><CopyIcon />eu-north-1</Field>
            </div>
            <div className="flex-1 border-l-2 border-[#c6c6cd] pl-[31px]">
              <Field label="Block Public Access"><Off /></Field>
              <Field label="IPv6 CIDR association ID">–</Field>
              <Field label="VPC"><span className="tracking-[-0.009em] text-[#2c68d8]">vpc-04b7af7f88d110d6c | PreciousVPC-vpc</span></Field>
            </div>
          </div>
        </div>
      </div>
    </div>
  );
}

function Footer() {
  return (
    <div className="flex h-[62px] shrink-0 items-center border-t-2 border-[#424650] bg-[#161d26] pl-[31px] pr-[31px] pt-[2px] text-[24px] font-medium text-[#ebebf0]">
      <ShellIcon className="h-[32px] w-[32px]" />
      <span className="ml-[10px] tracking-[-0.018em]">CloudShell</span>
      <span className="ml-[51px] tracking-[-0.03em]">Feedback</span>
      <span className="ml-auto font-normal tracking-[-0.013em] text-[#c6c6cd]">© 2025, Amazon Web Services, Inc. or its affiliates.</span>
      <span className="ml-[60px] tracking-[-0.03em]">Privacy</span>
      <span className="ml-[50px] tracking-[-0.03em]">Terms</span>
      <span className="ml-[50px] tracking-[-0.033em]">Cookie preferences</span>
    </div>
  );
}

function BrowserWindow() {
  return (
    <div className="relative mx-[17px] mt-[17px] flex h-[1951px] shrink-0 flex-col overflow-hidden rounded-[22px] bg-[#192116] shadow-[0_0_0_1px_#000,0_20px_40px_rgba(0,0,0,0.5)]">
      <TabStrip />
      <Toolbar />
      <div className="flex min-h-0 flex-1 flex-col bg-white font-['Noto_Sans',sans-serif]">
        <AwsNav />
        <PageBar />
        <div className="flex min-h-0 flex-1">
          <SideNav />
          <div className="relative flex flex-1 flex-col pl-[41px]">
            <SubnetsHeader />
            <FilterBar />
            <SubnetsTable />
            <DetailPanel />
          </div>
        </div>
        <Footer />
      </div>
      <div className="pointer-events-none absolute inset-0 rounded-[22px] shadow-[inset_0_2px_0_#5d6658,inset_0_-2px_0_#444a4f]" />
    </div>
  );
}

/* ---------- dock ---------- */

function Tile({ children, id, from, to }: { children?: ReactNode; id: string; from: string; to: string }) {
  return (
    <svg viewBox="0 0 100 100" className="h-[92px] w-[91px] drop-shadow-[0_2px_2px_rgba(0,0,0,0.3)]" preserveAspectRatio="none">
      <defs>
        <linearGradient id={"t-" + id} x1="0" y1="0" x2="0" y2="1">
          <stop offset="0" stopColor={from} /><stop offset="1" stopColor={to} />
        </linearGradient>
        <clipPath id={"c-" + id}><rect width="100" height="100" rx="23" /></clipPath>
      </defs>
      <g clipPath={`url(#c-${id})`}>
        <rect width="100" height="100" fill={`url(#t-${id})`} />
        {children}
      </g>
    </svg>
  );
}

function Finder() {
  return (
    <Tile id="finder" from="#5fc6f8" to="#3a6ee8">
      <path d="M56 0C48 20 43 38 43 58H58C57 75 59 88 63 100H100V0z" fill="#e9ebf0" />
      <path d="M56 0C48 20 43 38 43 58H58C57 75 59 88 63 100" fill="none" stroke="#c9d2e0" strokeWidth="1" />
      <path d="M27 30v7M73 30v7" stroke="#2a3138" strokeWidth="4.500" strokeLinecap="round" />
      <path d="M20 67c16 16 44 16 60 0" fill="none" stroke="#17191c" strokeWidth="3.200" strokeLinecap="round" />
    </Tile>
  );
}
function Launchpad() {
  const c = ["#72d84e", "#f3b63c", "#e88a34", "#d23a2e", "#9aa0a6", "#e84a5f", "#8a44c8", "#3b82ee", "#5cc49a"];
  return (
    <Tile id="lp" from="#d5cdc9" to="#cfc4c2">
      {c.map((f, i) => <rect key={f} x={17 + (i % 3) * 24.500} y={17 + Math.floor(i / 3) * 24.500} width="18" height="18" rx="4.500" fill={f} />)}
    </Tile>
  );
}
function Messages() {
  return (
    <Tile id="msg" from="#88f27e" to="#5bbf4c">
      <ellipse cx="50" cy="47" rx="37" ry="31" fill="#eef6ec" />
      <path d="M30 68c1 8-1 11-4 15 8-1 12-4 15-9z" fill="#dcebd9" />
    </Tile>
  );
}
function Mail() {
  return (
    <Tile id="mail" from="#3a6be8" to="#58bdf6">
      <rect x="15" y="28" width="70" height="44" rx="4" fill="#f1f1f3" />
      <path d="M17 70l26-22M83 70L57 48" stroke="#a8aab0" strokeWidth="2" />
      <path d="M17 30l28 27q5 4 10 0l28-27" fill="none" stroke="#a8aab0" strokeWidth="2.400" />
    </Tile>
  );
}
function Photos() {
  const c = ["#f0943a", "#eddc44", "#b5cf4c", "#66b68c", "#5a9ad6", "#7a7cc4", "#b268a8", "#e85a50"];
  return (
    <Tile id="ph" from="#ffffff" to="#fafafa">
      {c.map((f, i) => <rect key={f} x="37.500" y="7" width="25" height="40" rx="12.500" fill={f} opacity=".85" transform={`rotate(${i * 45} 50 50)`} />)}
    </Tile>
  );
}
function FaceTime() {
  return (
    <Tile id="ft" from="#88f07c" to="#56bb48">
      <rect x="15" y="28" width="48" height="44" rx="12" fill="#eaf4e8" />
      <path d="M67 45l13-11q4-2 4 3v26q0 5-4 3L67 55z" fill="#dcebd9" />
    </Tile>
  );
}
function CalendarTile() {
  return (
    <div className="flex h-[92px] w-[91px] flex-col items-center overflow-hidden rounded-[21px] bg-[#f8f8f7] font-['Inter',sans-serif]">
      <div className="h-[29px] w-full bg-[#e25b4f] text-center text-[17px] font-semibold leading-[32px] text-white">MAR</div>
      <div className="text-[52px] font-light leading-[59px] tracking-[-0.03em] text-[#2a2a2a]">30</div>
    </div>
  );
}
function Music() {
  return (
    <Tile id="mu" from="#ee6378" to="#e23a40">
      <path d="M38 74V26l32-9v50" fill="none" stroke="#fff" strokeWidth="5" />
      <path d="M36 24l36-9v12l-36 9z" fill="#fff" />
      <ellipse cx="30" cy="75" rx="10.500" ry="8" fill="#fff" /><ellipse cx="62" cy="68" rx="10.500" ry="8" fill="#fff" />
    </Tile>
  );
}
function AppStore() {
  return (
    <Tile id="as" from="#52b2f0" to="#2a56d4">
      <g stroke="#f4f8ff" strokeWidth="8" strokeLinecap="round">
        <path d="M54 22L35 60M46 22l28 54M18 61h34M66 61h16M25 76l3-6" />
      </g>
    </Tile>
  );
}
function Chrome() {
  return (
    <Tile id="ch" from="#ffffff" to="#ededed">
      <circle cx="50" cy="50" r="43" fill="#f0bd41" />
      <path d="M12.800 28.500A43 43 0 0 1 87.200 28.500H50L32 60z" fill="#d9503f" />
      <path d="M12.800 28.500A43 43 0 0 0 50 93L68.200 60.500 50 71 31.800 60.500z" fill="#4fa055" />
      <path d="M50 28.500H87.200" stroke="#d9503f" strokeWidth="1" />
      <circle cx="50" cy="50" r="21" fill="#fff" /><circle cx="50" cy="50" r="17" fill="#4379e0" />
    </Tile>
  );
}
function ITerm() {
  return (
    <Tile id="it" from="#c5d6dc" to="#7b7f82">
      <rect x="4" y="4" width="92" height="92" rx="19" fill="#000" /><rect x="8" y="8" width="84" height="84" rx="15" fill="#141b1e" />
      <text x="16" y="40" fontFamily="Liberation Mono, monospace" fontSize="26" fill="#5fe04a">$</text>
      <rect x="36" y="18" width="4" height="26" fill="#3c9a30" />
    </Tile>
  );
}
function VsCode() {
  return (
    <Tile id="vs" from="#ffffff" to="#fdfdfd">
      <path d="M14 62l10 6 44-36V16z" fill="#2b72c4" /><path d="M14 38l8-6 46 36v16L20 46z" fill="#2a63b0" />
      <path d="M14 62l8 6 46-36V16L20 54z" fill="#3577c8" />
      <path d="M66 15l19 9v52l-19 9z" fill="#4396e8" />
    </Tile>
  );
}
function ScreenshotTile() {
  return (
    <Tile id="sc" from="#f4f4f4" to="#c8c8c8">
      <rect x="5" y="5" width="90" height="88" rx="18" fill="#f3f3f3" />
      <path d="M13 36V22q0-9 9-9h14M64 13h14q9 0 9 9v14M87 64v14q0 9-9 9H64M36 87H22q-9 0-9-9V64" fill="none" stroke="#5a5a5a" strokeWidth="4" />
      <path d="M32 39h8l4-6h12l4 6h8q3 0 3 3v22q0 3-3 3H32q-3 0-3-3V42q0-3 3-3z" fill="#484848" />
      <circle cx="50" cy="51" r="9" fill="none" stroke="#f3f3f3" strokeWidth="3" />
    </Tile>
  );
}
function IconTile({ children, className }: { children: ReactNode; className: string }) {
  return <div className={"flex h-[92px] w-[91px] items-center justify-center rounded-[21px] " + className}>{children}</div>;
}
function Slack() {
  return (
    <Tile id="sl" from="#ffffff" to="#f8f8f8">
      <g fill="#5fbfe8"><rect x="15" y="34" width="33" height="14" rx="7" /><rect x="34" y="15" width="14" height="15" rx="7" /></g>
      <g fill="#4aae82"><rect x="52" y="15" width="14" height="33" rx="7" /><rect x="70" y="34" width="15" height="14" rx="7" /></g>
      <g fill="#e2b23e"><rect x="52" y="52" width="33" height="14" rx="7" /><rect x="52" y="70" width="14" height="15" rx="7" /></g>
      <g fill="#cc2f5c"><rect x="34" y="52" width="14" height="33" rx="7" /><rect x="15" y="52" width="15" height="14" rx="7" /></g>
    </Tile>
  );
}
function SystemSettings() {
  return (
    <Tile id="ss" from="#d3dde2" to="#8f8d8a">
      <circle cx="50" cy="50" r="40" fill="none" stroke="#3a3a3c" strokeWidth="6" strokeDasharray="2.200 1.400" />
      <circle cx="50" cy="50" r="36" fill="#8a8b8d" stroke="#2c2c2e" strokeWidth="5" />
      <circle cx="50" cy="50" r="27" fill="#6e6f71" stroke="#2f2f31" strokeWidth="6" />
      <path d="M50 50h28M50 50L36 26M50 50L36 74" stroke="#c5c8ca" strokeWidth="4" /><circle cx="50" cy="50" r="6" fill="#4a4a4c" stroke="#c5c8ca" strokeWidth="3" />
    </Tile>
  );
}
function Phone() {
  return (
    <Tile id="pn" from="#c3bdbf" to="#b9b4b8">
      <rect x="30" y="8" width="41" height="84" rx="8" fill="#14181c" /><rect x="32.500" y="10.500" width="36" height="79" rx="6" fill="#f0a79c" />
      <path d="M32.500 85C50 60 50 30 68.500 14V84q0 5.500-6 5.500H38q-5.500 0-5.500-4.500z" fill="#86979f" />
      <path d="M33 88C52 70 52 48 68.500 34V84q0 5.500-6 5.500H38z" fill="#1f5f80" />
      <rect x="44" y="11" width="13" height="4" rx="2" fill="#000" />
    </Tile>
  );
}
function Notes() {
  return (
    <Tile id="no" from="#f7f6f3" to="#e7e6e1">
      <rect width="100" height="26" fill="#f6cf46" /><path d="M0 26.500h100" stroke="#b09a50" strokeWidth="1" />
      <path d="M4 30h94" stroke="#b5b3ae" strokeWidth="2" strokeDasharray="1.500 2" /><path d="M0 50h100M0 75h100" stroke="#cfcdc8" strokeWidth="2" />
    </Tile>
  );
}
function Books() {
  return (
    <Tile id="bk" from="#f2a33c" to="#ec632a">
      <path d="M49 76V32q-2-9-16-9t-17 9v44q16-9 33 0zM51 76V32q2-9 16-9t17 9v44q-16-9-33 0z" fill="#fff" />
    </Tile>
  );
}
function Terminal() {
  return (
    <Tile id="tm" from="#cfe0e6" to="#77797b">
      <rect x="3" y="4" width="94" height="92" rx="20" fill="#000" /><rect x="12" y="12" width="76" height="76" rx="12" fill="#262626" />
      <path d="M18 18l11 7-11 7" fill="none" stroke="#fff" strokeWidth="3.600" /><path d="M34 38h14" stroke="#fff" strokeWidth="3.600" />
    </Tile>
  );
}
function PreviewArt({ id }: { id: string }) {
  return (
    <svg viewBox="0 0 104 108" className="h-full w-full overflow-visible">
      <defs><linearGradient id={id} x1="0" y1="0" x2="0" y2="1"><stop offset="0" stopColor="#9dbcf0" /><stop offset="1" stopColor="#c5d3f0" /></linearGradient></defs>
      <rect width="100" height="100" rx="23" fill="#eeeeee" /><rect x="7" y="8" width="86" height="84" rx="15" fill={`url(#${id})`} />
      <path d="M7 54h86v22H7z" fill="#2d3f78" /><path d="M7 70l20-6 22 4 44-4v14q0 14-15 14H22q-15 0-15-14z" fill="#5f6f80" />
      <path d="M8 78l12-8 8 4 10-5 9 8-8 13H22q-12-1-14-12z" fill="#dfe6ea" />
      <path d="M52 70h40l10 27q1 8-8 8H50q-9 0-7-8z" fill="#b0b3b6" stroke="#77797c" strokeWidth="1.500" />
      <path d="M58 76h28l6 18q0 5-8 5H60q-8 0-7-5z" fill="#dfe3e6" /><path d="M62 82l8-3 8 5 6 8H60z" fill="#8a95a0" />
      <rect x="50" y="50" width="45" height="21" rx="5" fill="#1b1c1e" /><ellipse cx="72.500" cy="51" rx="21" ry="3.500" fill="#4a4b4d" />
    </svg>
  );
}
function Trash() {
  return (
    <svg viewBox="0 0 84 106" className="h-[106px] w-[84px]">
      <defs><linearGradient id="tr" x1="0" y1="0" x2="1" y2="0"><stop offset="0" stopColor="#77797c" /><stop offset=".45" stopColor="#98999c" /><stop offset="1" stopColor="#5f6165" /></linearGradient></defs>
      <ellipse cx="42" cy="20" rx="40" ry="11" fill="#4c4d50" />
      <path d="M10 22L16 6l12 4 6-8 10 6 6-8 12 8 10-2 4 16-18 8H24z" fill="#ececec" />
      <path d="M22 12l10 8-8 6zM40 14l9 6-4 8z" fill="#3f8fb0" /><path d="M54 10l10 8-8 6z" fill="#b55a3c" /><path d="M34 20l8-8 6 10z" fill="#6a6d70" />
      <path d="M2 20c8 10 72 10 80 0L72 94q-2 10-30 10T12 94z" fill="url(#tr)" opacity=".93" />
      <path d="M2 20c8 10 72 10 80 0" fill="none" stroke="#c9cacc" strokeWidth="1.500" />
    </svg>
  );
}

const apps: { icon: ReactNode; badge?: string; dot?: boolean }[] = [
  { icon: <Finder />, dot: true },
  { icon: <Launchpad /> },
  { icon: <Messages /> },
  { icon: <Mail />, badge: "28,620", dot: true },
  { icon: <Photos /> },
  { icon: <FaceTime /> },
  { icon: <CalendarTile /> },
  { icon: <Music /> },
  { icon: <AppStore /> },
  { icon: <Chrome />, dot: true },
  { icon: <ITerm />, dot: true },
  { icon: <VsCode />, dot: true },
  { icon: <ScreenshotTile /> },
  { icon: <IconTile className="bg-white"><FaEvernote className="h-[66px] w-[62px] text-[#48a33c]" /></IconTile> },
  { icon: <IconTile className="bg-linear-to-b from-[#86f27c] to-[#56bb48]"><FaWhatsapp className="h-[78px] w-[76px] text-white" /></IconTile>, badge: "75", dot: true },
  { icon: <Slack />, badge: "392", dot: true },
  { icon: <SystemSettings />, badge: "1" },
  { icon: <IconTile className="bg-linear-to-t from-[#2046c8] to-[#2f66ee]"><span className="font-['Inter',sans-serif] text-[26px] font-bold tracking-[-0.06em] text-white">zoom</span></IconTile> },
  { icon: <Phone /> },
];

function DockApp({ icon, badge, dot }: { icon: ReactNode; badge?: string; dot?: boolean }) {
  return (
    <div className="relative h-[92px] w-[91px] shrink-0">
      {icon}
      {badge && (
        <span className="absolute -right-[14px] -top-[10px] flex h-[44px] min-w-[44px] items-center justify-center rounded-full bg-[#e0503f] px-[7px] font-['Inter',sans-serif] text-[23px] tracking-[-0.04em] text-white shadow-[0_1px_4px_rgba(0,0,0,0.4)]">{badge}</span>
      )}
      {dot && <span className="absolute left-[42px] top-[110px] h-[8px] w-[8px] rounded-full bg-[#eccfc9]" />}
    </div>
  );
}

function Dock() {
  return (
    <div className="relative mx-auto mt-[18px] flex h-[142px] w-[3217px] items-start rounded-[44px] border-2 border-[#8b7470] bg-[linear-gradient(90deg,#7a5450_0%,#7f5b3e_10%,#7b5a3c_17%,#70503f_25%,#584048_31%,#4a3f50_37%,#4c4148_43%,#57414f_49%,#64405a_55%,#55383e_61%,#4f383e_68%,#7a5148_74%,#8a5a4c_79%,#644548_84%,#4f3c48_90%,#553e52_95%,#473a4c_100%)] pl-[19px] pt-[18px] shadow-[0_0_0_1px_rgba(0,0,0,0.5)]">
      <div className="flex gap-[28.100px]">
        {apps.map((a, i) => <DockApp key={i} {...a} />)}
      </div>
      <span className="ml-[40px] mt-[-2px] h-[106px] w-[2px] bg-[#a08a8a]" />
      <div className="ml-[41px] flex gap-[28px]">
        <DockApp icon={<Notes />} dot />
        <DockApp icon={<Books />} dot />
        <DockApp icon={<Terminal />} dot />
        <DockApp icon={<div className="h-[98px] w-[94px]"><PreviewArt id="pv1" /></div>} dot />
      </div>
      <span className="ml-[40px] mt-[-2px] h-[106px] w-[2px] bg-[#8b7882]" />
      <div className="relative ml-[33px] mt-[16px] h-[60px] w-[105px] bg-[#171a19] p-[3px]">
        <div className="flex h-full gap-[2px]">
          <div className="flex w-[24px] flex-col justify-around bg-[#1f2425] pl-[3px]">
            {["a", "b", "c", "d", "e", "f"].map((k) => <span key={k} className="h-[3px] w-[14px] bg-[#5f5a5a]" />)}
          </div>
          <div className="flex w-[22px] flex-col justify-around">
            <span className="ml-[6px] h-[6px] w-[10px] bg-[#c98f6a]" />
            <span className="h-[3px] w-[18px] bg-[#3d4a6a]" />
            <span className="h-[3px] w-[14px] bg-[#7a5f3c]" />
            <span className="h-[3px] w-[18px] bg-[#4d5a58]" />
          </div>
        </div>
        <span className="absolute -bottom-[20px] right-[3px] flex h-[34px] w-[34px] items-center justify-center rounded-[8px] bg-[#5fcf55]"><FaWhatsapp className="h-[28px] w-[28px] text-white" /></span>
      </div>
      <div className="relative ml-[14px] mt-[10px] flex h-[72px] w-[104px] flex-col bg-white">
        <div className="h-[4px] bg-[#3a3038]" />
        <div className="h-[7px] bg-[#25301f]" />
        <div className="h-[4px] bg-[#161d26]" />
        <div className="flex flex-1 gap-[4px] p-[3px]">
          <div className="w-[12px] border-r border-[#d5d5da] bg-[repeating-linear-gradient(#b9bcc4_0_1px,#fff_1px_4px)]" />
          <div className="flex flex-1 flex-col gap-[6px] pt-[2px]">
            <span className="h-[2px] w-[24px] bg-[#5a5d66]" />
            <span className="h-[2px] w-[70px] bg-[#c3cfe8]" />
            <span className="h-[2px] w-[30px] bg-[#6f95e0]" />
            <span className="h-[2px] w-[76px] bg-[#d0d3da]" />
          </div>
        </div>
        <div className="h-[7px] bg-[repeating-linear-gradient(90deg,#6a4a44_0_3px,#8fb0d8_3px_6px,#a8c088_6px_9px)]" />
        <span className="absolute -bottom-[16px] right-0 h-[35px] w-[34px]"><PreviewArt id="pv2" /></span>
      </div>
      <div className="ml-[26px] mt-[-9px]"><Trash /></div>
    </div>
  );
}

function DockTooltip() {
  return (
    <div className="absolute left-[1497px] top-[1984px] h-[73px] w-[202px] font-['Inter',sans-serif]">
      <svg className="absolute inset-0 h-[73px] w-[202px]" viewBox="0 0 202 73">
        <path d="M9 2.500H193q7 0 7 7V46q0 7-7 7H120q-5 0-8 5L101 71 90 58q-3-5-8-5H9q-7 0-7-7V9.500q0-7 7-7z" fill="#2a2b30" stroke="#000" strokeWidth="4" />
        <path d="M9 3.500H193q6 0 6 6V46q0 6-6 6H120q-5 0-9 5L101 69 91 57q-4-5-9-5H9q-6 0-6-6V9.500q0-6 6-6z" fill="#2a2b30" stroke="#5a5b60" strokeWidth="1.500" />
      </svg>
      <div className="relative h-[58px] text-center text-[28px] leading-[58px] tracking-[-0.02em] text-[#ececee]">Screenshot</div>
    </div>
  );
}

export default function App() {
  return (
    <div className="relative flex h-[2224px] w-[3420px] flex-col overflow-hidden bg-[#3d343c]">
      <Wallpaper />
      <div className="absolute -left-[8px] top-[1194px] font-['Inter',sans-serif] text-[22px] font-medium text-[#d8d4d6]">cr</div>
      <div className="absolute -left-[6px] top-[1560px] font-['Inter',sans-serif] text-[22px] font-medium text-[#d8d4d6]">ou</div>
      <div className="absolute left-[7px] top-[1592px] font-['Inter',sans-serif] text-[22px] font-medium text-[#d8d4d6]">r</div>
      <MenuBar />
      <BrowserWindow />
      <Dock />
      <DockTooltip />
    </div>
  );
}
